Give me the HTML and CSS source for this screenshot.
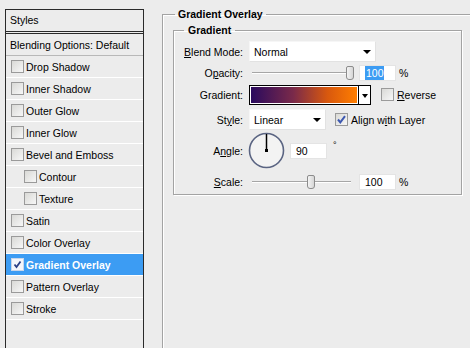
FILE: index.html
```html
<!DOCTYPE html>
<html lang="en">

<head>
    <meta charset="UTF-8">
    <meta name="viewport" content="width=device-width, initial-scale=1.0">
    <title>Layer Style - Gradient Overlay</title>
    <link rel="stylesheet" href="styles.css">
</head>

<body>
    <div class="dialog">
        <div class="styles-list">
            <div class="list-head">Styles</div>
            <div class="list-item blend">Blending Options: Default</div>
            <div class="list-item"><span class="check"></span>Drop Shadow</div>
            <div class="list-item"><span class="check"></span>Inner Shadow</div>
            <div class="list-item"><span class="check"></span>Outer Glow</div>
            <div class="list-item"><span class="check"></span>Inner Glow</div>
            <div class="list-item"><span class="check"></span>Bevel and Emboss</div>
            <div class="list-item sub"><span class="check"></span>Contour</div>
            <div class="list-item sub"><span class="check"></span>Texture</div>
            <div class="list-item"><span class="check"></span>Satin</div>
            <div class="list-item"><span class="check"></span>Color Overlay</div>
            <div class="list-item active">
                <span class="check on">
                    <svg width="11" height="11" viewBox="0 0 11 11"><path d="M2.5 5.5 L4.5 8 L8.5 2.5" fill="none" stroke="#2b3f86" stroke-width="1.8"/></svg>
                </span>Gradient Overlay
            </div>
            <div class="list-item"><span class="check"></span>Pattern Overlay</div>
            <div class="list-item"><span class="check"></span>Stroke</div>
        </div>

        <fieldset class="group outer">
            <legend>Gradient Overlay</legend>
            <fieldset class="group inner">
                <legend>Gradient</legend>

                <div class="row row-blend">
                    <label class="lbl"><u>B</u>lend Mode:</label>
                    <div class="select wide">Normal<span class="arrow"></span></div>
                </div>

                <div class="row row-opacity">
                    <label class="lbl">O<u>p</u>acity:</label>
                    <div class="slider">
                        <div class="track"></div>
                        <div class="thumb" style="left: 97px"></div>
                    </div>
                    <div class="num"><span class="sel">100</span></div>
                    <span class="unit">%</span>
                </div>

                <div class="row row-gradient">
                    <label class="lbl">Gradient:</label>
                    <div class="swatch">
                        <div class="grad-fill"></div>
                        <div class="grad-btn"><span class="arrow small"></span></div>
                    </div>
                    <span class="check-opt"><span class="check"></span><u>R</u>everse</span>
                </div>

                <div class="row row-style">
                    <label class="lbl">St<u>y</u>le:</label>
                    <div class="select narrow">Linear<span class="arrow"></span></div>
                    <span class="check-opt">
                        <span class="check">
                            <svg width="11" height="11" viewBox="0 0 11 11"><path d="M2 5.5 L4.3 8.3 L9 2.2" fill="none" stroke="#3d58b0" stroke-width="2"/></svg>
                        </span>Align w<u>i</u>th Layer
                    </span>
                </div>

                <div class="row row-angle">
                    <label class="lbl">A<u>n</u>gle:</label>
                    <svg class="dial" width="37" height="37" viewBox="0 0 37 37">
                        <circle cx="18.5" cy="18.5" r="17" fill="#f3f3f3" stroke="#5a6482" stroke-width="1.6"/>
                        <line x1="18.5" y1="18.5" x2="18.5" y2="2" stroke="#000" stroke-width="1.5"/>
                        <rect x="17" y="17" width="3" height="3" fill="#000"/>
                    </svg>
                    <div class="num short">90</div>
                    <span class="deg">°</span>
                </div>

                <div class="row row-scale">
                    <label class="lbl"><u>S</u>cale:</label>
                    <div class="slider">
                        <div class="track"></div>
                        <div class="thumb" style="left: 58px"></div>
                    </div>
                    <div class="num">100</div>
                    <span class="unit">%</span>
                </div>
            </fieldset>
        </fieldset>
    </div>
</body>

</html>
```

FILE: styles.css
```css
body {
    margin: 0;
    width: 470px;
    height: 348px;
    overflow: hidden;
    background-color: #ececec;
    font-family: "Liberation Sans", Arial, sans-serif;
    font-size: 10.5px;
    color: #000;
}

.dialog {
    display: flex;
    align-items: flex-start;
    gap: 18px;
    padding: 9px 0 0 5px;
}

/* left list of effects, runs off the bottom of the window */
.styles-list {
    flex: none;
    box-sizing: border-box;
    width: 139px;
    height: 339px;
    border: 1px solid #2a2a2a;
    border-bottom: none;
    background-color: #ececec;
}

.list-head {
    height: 21px;
    line-height: 21px;
    padding-left: 4px;
    border-bottom: 3px double #2a2a2a;
}

.list-item {
    display: flex;
    align-items: center;
    height: 21px;
    padding-left: 5px;
    border-bottom: 1px solid #ffffff;
}

.list-item.blend {
    padding-left: 4px;
    border-bottom-color: #b8b8b8;
}

.list-item.sub {
    padding-left: 18px;
}

.list-item.active {
    background-color: #3c9cf3;
    color: #fff;
    font-weight: bold;
}

.check {
    flex: none;
    box-sizing: border-box;
    width: 13px;
    height: 13px;
    margin-right: 2px;
    border: 1px solid #9a9a9a;
    background: linear-gradient(135deg, #d9d9d6, #f7f7f7);
    display: flex;
    align-items: center;
    justify-content: center;
}

.check.on {
    background: #f4f6fb;
    border-color: #c8d6ea;
}

/* fieldsets */
.group {
    margin: 0;
    min-width: 0;
    border: 1px solid #a3a3a3;
    box-shadow: inset 1px 1px 0 #fff, 1px 1px 0 #fff;
}

.group legend {
    font-weight: bold;
}

.outer {
    flex: none;
    box-sizing: border-box;
    width: 308px;
    height: 339px;
    padding: 5px 0 0 10px;
    border-right: none;
    border-bottom: none;
}

.outer > legend {
    margin-left: 2px;
    padding: 0 3px;
    line-height: 10px;
}

.inner {
    box-sizing: border-box;
    width: 289px;
    padding: 5px 0 4px 0;
}

.inner > legend {
    margin-left: 10px;
    padding: 0 4px;
    line-height: 12px;
}

/* rows */
.row {
    display: flex;
    align-items: center;
}

.lbl {
    flex: none;
    width: 69px;
    margin-right: 6px;
    text-align: right;
}

.row-blend { height: 21px; }
.row-opacity { height: 18px; margin-top: 2px; }
.row-gradient { height: 21px; margin-top: 2px; }
.row-style { height: 21px; margin-top: 4px; }
.row-angle { height: 37px; margin-top: 2px; }
.row-scale { height: 17px; margin-top: 4px; }

.select {
    position: relative;
    box-sizing: border-box;
    height: 21px;
    line-height: 20px;
    padding-left: 4px;
    background-color: #fff;
    border: 1px solid #e2e2e2;
    border-top-color: #f6f6f6;
    border-left-color: #f6f6f6;
}

.select.wide { width: 127px; }
.select.narrow { width: 77px; }

.arrow {
    position: absolute;
    right: 4px;
    top: 8px;
    width: 0;
    height: 0;
    border-left: 4px solid transparent;
    border-right: 4px solid transparent;
    border-top: 4px solid #000;
}

.arrow.small {
    right: 2px;
    top: 8px;
    border-left-width: 3px;
    border-right-width: 3px;
    border-top-width: 4px;
}

.slider {
    position: relative;
    flex: none;
    width: 106px;
    height: 16px;
    margin-right: 4px;
}

.track {
    margin: 7px 0 0 3px;
    width: 99px;
    height: 1px;
    background-color: #a6a6a6;
    border-bottom: 1px solid #fff;
}

.thumb {
    position: absolute;
    top: 1px;
    box-sizing: border-box;
    width: 8px;
    height: 14px;
    border: 1px solid #8c8c8c;
    border-radius: 2px 2px 3px 3px;
    background: linear-gradient(90deg, #f4f4f4, #d6d6d6);
}

.num {
    flex: none;
    box-sizing: border-box;
    width: 37px;
    height: 16px;
    line-height: 15px;
    padding-left: 5px;
    background-color: #fff;
    border: 1px solid #e4e4e4;
}

.num .sel {
    background-color: #3c9cf3;
    color: #fff;
    padding: 1px 0 1px 1px;
}

.num.short {
    margin-left: 5px;
}

.unit {
    margin-left: 3px;
}

.deg {
    align-self: flex-start;
    margin: 8px 0 0 6px;
    font-size: 9px;
}

.swatch {
    display: flex;
    box-sizing: border-box;
    height: 20px;
    border: 1px solid #000;
    background-color: #fff;
}

.grad-fill {
    width: 106px;
    margin: 1px;
    background: linear-gradient(to right, #2a0a5e, #7a2a4a 40%, #d8580e 72%, #ff7e00);
}

.grad-btn {
    position: relative;
    width: 11px;
    border-left: 1px solid #000;
}

.check-opt {
    display: flex;
    align-items: center;
    margin-left: 10px;
}

.row-style .check-opt {
    margin-left: 9px;
}

.row-gradient .check-opt .check,
.row-style .check-opt .check {
    margin-right: 3px;
}

.dial {
    flex: none;
    margin-left: -1px;
}
```
